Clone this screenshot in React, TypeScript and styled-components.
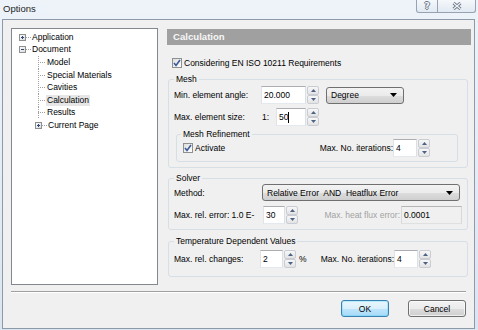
import React from "react";
import styled, { createGlobalStyle } from "styled-components";

const GlobalStyle = createGlobalStyle`
  html, body { margin: 0; padding: 0; }
  body {
    font-family: "Liberation Sans", Arial, sans-serif;
    font-size: 8.5px;
    color: #000;
  }
  * { box-sizing: border-box; }
`;

const ExpandBox = ({ open }: { open?: boolean }) => (
  <svg width="7" height="7" viewBox="0 0 7 7">
    <defs>
      <linearGradient id="eb" x1="0" y1="0" x2="1" y2="1">
        <stop offset="0" stopColor="#ffffff" />
        <stop offset="1" stopColor="#d8d8d8" />
      </linearGradient>
    </defs>
    <rect x="0.5" y="0.5" width="6" height="6" fill="url(#eb)" stroke="#8f8f8f" />
    <path d="M2 3.5H5" stroke="#2b4a7c" />
    {!open && <path d="M3.5 2V5" stroke="#2b4a7c" />}
  </svg>
);

const Check = () => (
  <CheckBox>
    <svg width="8" height="8" viewBox="0 0 8 8">
      <path d="M1 4L3 6.4L7 1" fill="none" stroke="#3c5a98" strokeWidth="1.6" />
    </svg>
  </CheckBox>
);

const Spin = () => (
  <Spinner>
    <SpinBtn>
      <svg width="5" height="3" viewBox="0 0 5 3">
        <path d="M0 3L2.5 0L5 3Z" fill="#4d6185" />
      </svg>
    </SpinBtn>
    <SpinBtn>
      <svg width="5" height="3" viewBox="0 0 5 3">
        <path d="M0 0L2.5 3L5 0Z" fill="#4d6185" />
      </svg>
    </SpinBtn>
  </Spinner>
);

const Combo = ({ width, height, children }: { width: number; height: number; children: React.ReactNode }) => (
  <ComboBox $w={width} $h={height}>
    <span>{children}</span>
    <svg width="7" height="4" viewBox="0 0 7 4">
      <path d="M0 0H7L3.5 4Z" fill="#000" />
    </svg>
  </ComboBox>
);

const treeItems = [
  { label: "Application", kind: "closed", indent: 7 },
  { label: "Document", kind: "open", indent: 7 },
  { label: "Model", kind: "leaf", indent: 26 },
  { label: "Special Materials", kind: "leaf", indent: 26 },
  { label: "Cavities", kind: "leaf", indent: 26 },
  { label: "Calculation", kind: "leaf", indent: 26, selected: true },
  { label: "Results", kind: "leaf", indent: 26 },
  { label: "Current Page", kind: "closed", indent: 23 },
];

export default function App() {
  return (
    <>
      <GlobalStyle />
      <Window>
        <TitleBar>
          <Title>Options</Title>
          <CaptionButtons>
            <CapBtn $w={22}>
              <HelpGlyph>?</HelpGlyph>
            </CapBtn>
            <CapBtn $w={38}>
              <svg width="10" height="8" viewBox="0 0 10 8">
                <path d="M1.5 1L8.5 7M8.5 1L1.5 7" stroke="#6a7687" strokeWidth="3" />
                <path d="M1.5 1L8.5 7M8.5 1L1.5 7" stroke="#f4f6f9" strokeWidth="1.2" />
              </svg>
            </CapBtn>
          </CaptionButtons>
        </TitleBar>

        <Client>
          <Main>
            <Tree>
              {treeItems.map((item) => (
                <TreeRow key={item.label} $indent={item.indent}>
                  {item.kind === "leaf" ? (
                    <Branch />
                  ) : (
                    <>
                      <ExpandBox open={item.kind === "open"} />
                      <Dash />
                    </>
                  )}
                  <TreeLabel $selected={!!item.selected}>{item.label}</TreeLabel>
                </TreeRow>
              ))}
            </Tree>

            <Panel>
              <Header>Calculation</Header>
              <CheckRow>
                <Check />
                <span>Considering EN ISO 10211 Requirements</span>
              </CheckRow>

              <Group $mt={6} $pr={5}>
                <Legend>Mesh</Legend>
                <Row $mt={2} $h={18}>
                  <Label $w={87}>Min. element angle:</Label>
                  <Input $w={45}>20.000</Input>
                  <Spin />
                  <ComboGap />
                  <Combo width={78} height={17}>Degree</Combo>
                </Row>
                <Row $mt={4} $h={18}>
                  <Label $w={87}>Max. element size:</Label>
                  <Ratio>1:</Ratio>
                  <Input $w={30}>
                    50<Caret />
                  </Input>
                  <Spin />
                </Row>

                <SubGroup>
                  <Legend>Mesh Refinement</Legend>
                  <Row $mt={0} $h={18}>
                    <CheckLabel>
                      <Check />
                      <span>Activate</span>
                    </CheckLabel>
                    <Cluster>
                      <span>Max. No. iterations:</span>
                      <Input $w={24}>4</Input>
                      <Spin />
                    </Cluster>
                  </Row>
                </SubGroup>
              </Group>

              <Group $mt={5} $pr={5}>
                <Legend>Solver</Legend>
                <Row $mt={1} $h={17}>
                  <Label $w={88}>Method:</Label>
                  <Combo width={198} height={17}>
                    Relative Error&nbsp; AND&nbsp; Heatflux Error
                  </Combo>
                </Row>
                <Row $mt={5} $h={18}>
                  <Label $w={89}>Max. rel. error: 1.0 E-</Label>
                  <Input $w={22}>30</Input>
                  <Spin />
                  <Cluster>
                    <Muted>Max. heat flux error:</Muted>
                    <Input $w={61} $disabled>
                      0.0001
                    </Input>
                  </Cluster>
                </Row>
              </Group>

              <Group $mt={6} $pr={36} $pb={8}>
                <Legend>Temperature Dependent Values</Legend>
                <Row $mt={4} $h={18}>
                  <Label $w={86}>Max. rel. changes:</Label>
                  <Input $w={23}>2</Input>
                  <Spin />
                  <Unit>%</Unit>
                  <Cluster>
                    <span>Max. No. iterations:</span>
                    <Input $w={24}>4</Input>
                    <Spin />
                  </Cluster>
                </Row>
              </Group>
            </Panel>
          </Main>

          <Separator />

          <ButtonRow>
            <Button $w={48} $default>
              OK
            </Button>
            <Button $w={58}>Cancel</Button>
          </ButtonRow>
        </Client>
      </Window>
    </>
  );
}

const Window = styled.div`
  width: 478px;
  height: 330px;
  display: flex;
  flex-direction: column;
  background: linear-gradient(#edf3f9, #dbe5f0);
`;

const TitleBar = styled.div`
  height: 19px;
  display: flex;
  justify-content: space-between;
  align-items: flex-start;
  padding-left: 3px;
  flex-shrink: 0;
`;

const Title = styled.div`
  font-size: 9.5px;
  line-height: 18px;
  color: #1e1e1e;
`;

const CaptionButtons = styled.div`
  display: flex;
  margin-right: 2px;
`;

const CapBtn = styled.div<{ $w: number }>`
  width: ${(p) => p.$w}px;
  height: 13px;
  display: flex;
  align-items: center;
  justify-content: center;
  border: 1px solid #97a3b2;
  border-top: none;
  background: linear-gradient(#f5f8fb, #e2e9f2);
  &:first-child {
    border-bottom-left-radius: 3px;
  }
  & + & {
    border-left: none;
    border-bottom-right-radius: 3px;
  }
`;

const HelpGlyph = styled.span`
  font-family: "DejaVu Sans", sans-serif;
  font-weight: bold;
  font-size: 9px;
  line-height: 10px;
  color: #f4f6f9;
  text-shadow: 0 1px 0 #6a7687, 0 -1px 0 #6a7687, 1px 0 0 #6a7687, -1px 0 0 #6a7687;
`;

const Client = styled.div`
  flex: 1;
  margin: 0 3px 1px 2px;
  border: 1px solid #8d9aa9;
  background: #f0f0f0;
  padding: 8px 8px 0;
  display: flex;
  flex-direction: column;
`;

const Main = styled.div`
  display: flex;
  gap: 9px;
  height: 257px;
  flex-shrink: 0;
`;

const Tree = styled.div`
  width: 147px;
  flex-shrink: 0;
  border: 1px solid #828790;
  background: #fff;
  padding-top: 2px;
`;

const TreeRow = styled.div<{ $indent: number }>`
  display: flex;
  align-items: center;
  height: 12.6px;
  padding-left: ${(p) => p.$indent}px;
`;

const Dash = styled.span`
  width: 5px;
  height: 1px;
  background: repeating-linear-gradient(to right, #a0a0a0 0 1px, transparent 1px 2px);
`;

const Branch = styled.span`
  width: 8px;
  height: 100%;
  background:
    repeating-linear-gradient(to bottom, #a0a0a0 0 1px, transparent 1px 2px) left top / 1px 100% no-repeat,
    repeating-linear-gradient(to right, #a0a0a0 0 1px, transparent 1px 2px) left 50% / 100% 1px no-repeat;
`;

const TreeLabel = styled.span<{ $selected: boolean }>`
  padding: 1px 1px;
  line-height: 9px;
  background: ${(p) => (p.$selected ? "#e6e6e6" : "transparent")};
`;

const Panel = styled.div`
  width: 304px;
  flex-shrink: 0;
  padding-top: 1px;
  display: flex;
  flex-direction: column;
`;

const Header = styled.div`
  height: 16px;
  background: #a0a0a0;
  color: #f6f6f6;
  font-weight: bold;
  font-size: 9.6px;
  line-height: 16px;
  padding-left: 6px;
`;

const CheckRow = styled.div`
  margin-top: 12px;
  height: 11px;
  display: flex;
  align-items: center;
  gap: 2px;
  padding-left: 5px;
`;

const CheckBox = styled.span`
  width: 10px;
  height: 10px;
  flex-shrink: 0;
  border: 1px solid #8e8f8f;
  background: linear-gradient(135deg, #dedede, #ffffff);
  display: flex;
  align-items: center;
  justify-content: center;
`;

const CheckLabel = styled.span`
  display: flex;
  align-items: center;
  gap: 2px;
  margin-left: 2px;
`;

const Group = styled.fieldset<{ $mt: number; $pr: number; $pb?: number }>`
  margin: ${(p) => p.$mt}px 0 0 1px;
  width: 300px;
  min-width: 0;
  border: 1px solid #d5dfe5;
  border-radius: 3px;
  padding: 0 ${(p) => p.$pr}px ${(p) => p.$pb ?? 5}px 5px;
`;

const SubGroup = styled.fieldset`
  margin: 3px 0 0 2px;
  width: 282px;
  min-width: 0;
  border: 1px solid #d5dfe5;
  border-radius: 3px;
  padding: 0 27px 4px 4px;
`;

const Legend = styled.legend`
  padding: 0 2px;
  font-size: 8.5px;
  line-height: 10px;
`;

const Row = styled.div<{ $mt: number; $h: number }>`
  display: flex;
  align-items: center;
  height: ${(p) => p.$h}px;
  margin-top: ${(p) => p.$mt}px;
`;

const Label = styled.span<{ $w: number }>`
  width: ${(p) => p.$w}px;
  flex-shrink: 0;
  white-space: nowrap;
`;

const Ratio = styled.span`
  width: 15px;
  padding-left: 1px;
`;

const Unit = styled.span`
  margin-left: 3px;
`;

const Muted = styled.span`
  color: #a2a2a2;
  margin-right: 1px;
`;

const Cluster = styled.div`
  margin-left: auto;
  display: flex;
  align-items: center;
  height: 100%;
  white-space: nowrap;
`;

const Input = styled.div<{ $w: number; $disabled?: boolean }>`
  width: ${(p) => p.$w}px;
  height: 100%;
  display: flex;
  align-items: center;
  padding-left: 2px;
  border: 1px solid;
  border-color: #abadb3 #dbdfe6 #e3e9ef #e2e3ea;
  background: ${(p) => (p.$disabled ? "#f0f0f0" : "#fff")};
  ${(p) => p.$disabled && "border-color: #b5b5b5 #d8d8d8 #e0e0e0 #d8d8d8;"}
`;

const Caret = styled.span`
  width: 1px;
  height: 11px;
  background: #000;
`;

const Spinner = styled.div`
  width: 12px;
  height: 100%;
  margin-left: 1px;
  display: flex;
  flex-direction: column;
`;

const SpinBtn = styled.div`
  flex: 1;
  display: flex;
  align-items: center;
  justify-content: center;
  border: 1px solid #c9ccd2;
  border-radius: 2px;
  background: linear-gradient(#f7f7f7, #e3e3e3);
`;

const ComboGap = styled.span`
  width: 7px;
`;

const ComboBox = styled.div<{ $w: number; $h: number }>`
  width: ${(p) => p.$w}px;
  height: ${(p) => p.$h}px;
  display: flex;
  align-items: center;
  justify-content: space-between;
  padding: 0 6px 0 4px;
  border: 1px solid #707070;
  border-radius: 3px;
  background: linear-gradient(#f3f3f3 0%, #ebebeb 50%, #dddddd 51%, #cfcfcf 100%);
  white-space: nowrap;
`;

const Separator = styled.div`
  margin-top: 6px;
  height: 2px;
  border-top: 1px solid #a0a0a0;
  border-bottom: 1px solid #ffffff;
`;

const ButtonRow = styled.div`
  margin-top: 7px;
  display: flex;
  justify-content: flex-end;
  gap: 19px;
`;

const Button = styled.div<{ $w: number; $default?: boolean }>`
  width: ${(p) => p.$w}px;
  height: 17px;
  display: flex;
  align-items: center;
  justify-content: center;
  border-radius: 3px;
  border: 1px solid ${(p) => (p.$default ? "#3c7fb1" : "#707070")};
  box-shadow: inset 0 0 0 1px ${(p) => (p.$default ? "#48d9fa55" : "#ffffffaa")};
  background: ${(p) =>
    p.$default
      ? "linear-gradient(#eaf6fd 0%, #d9f0fc 50%, #bee6fd 51%, #a7d9f5 100%)"
      : "linear-gradient(#f2f2f2 0%, #ebebeb 50%, #dddddd 51%, #cfcfcf 100%)"};
`;
